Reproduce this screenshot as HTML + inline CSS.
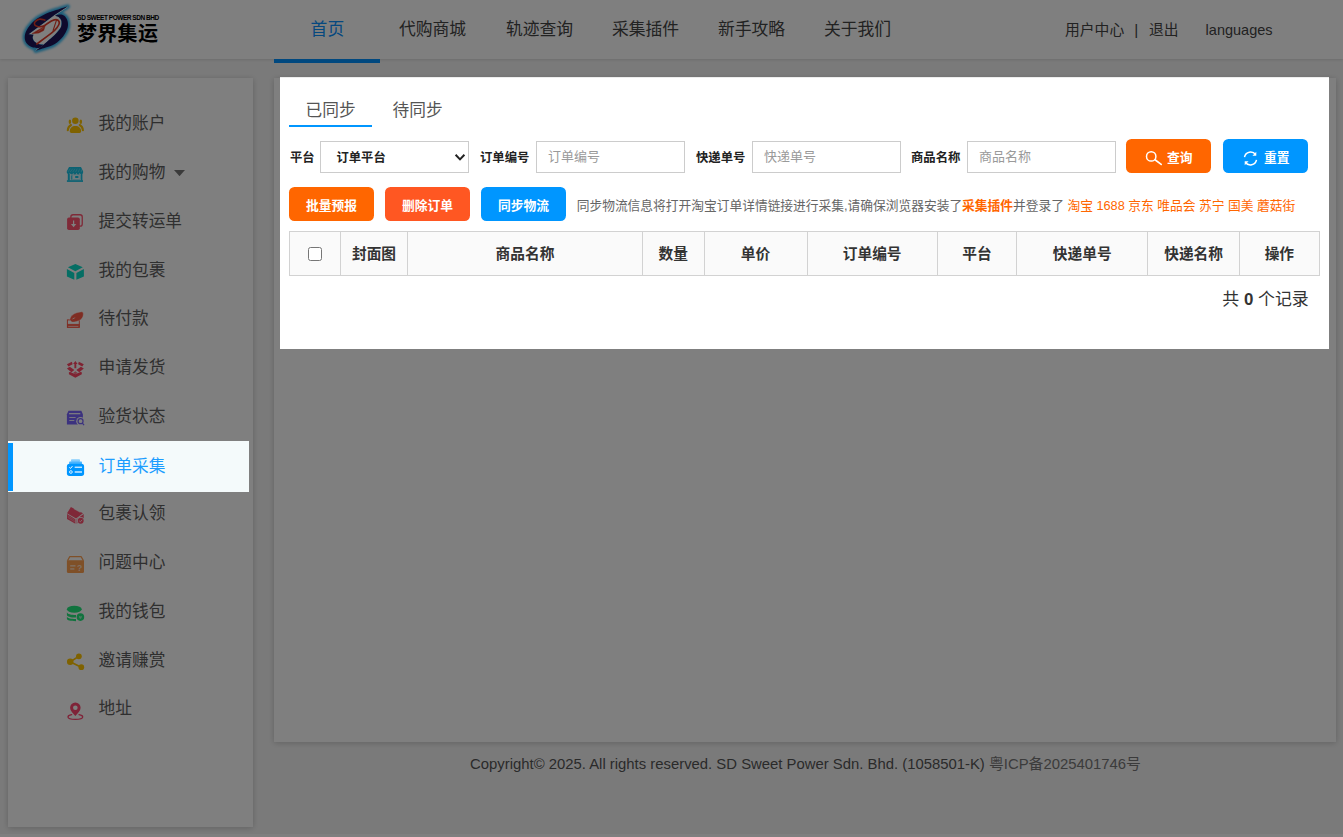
<!DOCTYPE html>
<html lang="zh-CN">
<head>
<meta charset="utf-8">
<title>订单采集 - 梦界集运</title>
<style>
*{box-sizing:border-box;margin:0;padding:0}
html,body{width:1343px;height:837px;overflow:hidden}
body{font-family:"Liberation Sans","Noto Sans CJK SC",sans-serif;background:#f5f5f5;color:#333;position:relative;font-size:14px}
a{text-decoration:none;color:inherit}
/* header */
#hd{position:absolute;left:0;top:0;width:1343px;height:59px;background:#fff;box-shadow:0 1px 3px rgba(0,0,0,.12)}
#logo{position:absolute}
#brand-s{position:absolute;left:77.3px;top:13.3px;font-size:6.5px;font-weight:bold;color:#000;letter-spacing:-.47px;white-space:nowrap;line-height:9px}
#brand{position:absolute;left:77px;top:20px;font-size:20px;font-weight:bold;color:#000;line-height:28px;white-space:nowrap;letter-spacing:.3px}
.nav{position:absolute;top:0;height:59px;line-height:59px;font-size:16.8px;color:#444;white-space:nowrap}
.nav.on{color:#0a90ff}
#navline{position:absolute;left:274px;top:59px;width:106px;height:3.8px;background:#0090ff}
.ur{position:absolute;top:0;height:59px;line-height:61px;font-size:14.8px;color:#444;white-space:nowrap}
/* sidebar */
#side{position:absolute;left:8px;top:77.7px;width:245px;height:749px;background:#fff;box-shadow:0 1px 6px rgba(0,0,0,.2)}
.mi{position:absolute;left:0;width:245px;height:49px}
.mi span{position:absolute;left:90.6px;top:0;line-height:51.4px;font-size:16.7px;color:#5e5e5e;white-space:nowrap}
/* main */
#main{position:absolute;left:274px;top:78px;width:1062px;height:663.7px;background:#fff;box-shadow:0 1px 6px rgba(0,0,0,.2)}
#bot{position:absolute;left:0;top:834px;width:1343px;height:3px;background:#fff}
#ft{position:absolute;left:274px;top:753.6px;width:1063px;text-align:center;font-size:14.86px;color:#555;line-height:20px;white-space:nowrap}
#ft b{font-weight:normal;color:#777}
#shade{position:absolute;left:0;top:0;width:1343px;height:837px;background:rgba(0,0,0,.5)}
/* active item above shade */
#act{position:absolute;left:8px;top:441px;width:241px;height:51px;background:#f4fafb}
#act i{position:absolute;left:0;top:1.5px;width:5px;height:48.5px;background:#0096ff}
#act span{position:absolute;left:90.6px;top:0;line-height:51px;font-size:16.7px;color:#1c9dff;white-space:nowrap}
/* modal */
#md{position:absolute;left:280px;top:77px;width:1049px;height:271.8px;background:#fff;box-shadow:inset 0 1px 0 #ececec}
.tab{position:absolute;top:21px;font-size:16.7px;line-height:26px;color:#555;white-space:nowrap}
#tabline{position:absolute;left:9px;top:48px;width:83px;height:2.4px;background:#0096ff}
.lb{position:absolute;top:66px;line-height:31px;font-size:12.35px;font-weight:bold;color:#222;white-space:nowrap}
.ip{position:absolute;top:64px;width:149px;height:32px;border:1px solid #ccc;background:#fff;font-size:13px;color:#9a9a9a;line-height:29px;padding-left:11px;white-space:nowrap}
.sel{color:#222;font-size:12.3px;font-weight:bold;padding-left:15.5px;line-height:32px}
.sel svg{position:absolute;left:133px;top:11px;width:12px;height:9px}
.btn{position:absolute;height:34px;width:85px;border-radius:5.5px;color:#fff;font-size:12.75px;font-weight:bold;text-align:center;line-height:38px;white-space:nowrap}
.btn svg{position:absolute}
#tip{position:absolute;left:296.7px;top:111.6px;line-height:34px;font-size:12.75px;color:#666;white-space:nowrap;letter-spacing:-.02px}
#tip i{font-style:normal;color:#ff6600}
#tb{position:absolute;left:9px;top:153.8px;width:1030.0px;height:44px;border-collapse:collapse;table-layout:fixed}
#tb th{border:1px solid #d2d2d2;background:#fafafa;font-size:14.7px;font-weight:bold;color:#333;text-align:center;height:44px;vertical-align:middle;padding-bottom:1.5px}
#cnt{position:absolute;right:20.3px;top:210.2px;font-size:16.9px;line-height:26px;color:#333;white-space:nowrap}
.cb{display:inline-block;width:14px;height:14px;border:1px solid #767676;border-radius:2.5px;background:#fff;vertical-align:middle;margin-top:0;position:relative;top:.5px}
</style>
</head>
<body>
<div id="hd">
  <svg id="logo" viewBox="10 0 80 60" style="left:10px;top:0;width:80px;height:60px">
   <defs><filter id="gl" x="-20%" y="-20%" width="140%" height="140%"><feGaussianBlur stdDeviation="1.05"/></filter></defs>
   <g filter="url(#gl)" fill="#3bbdf5" stroke="#3bbdf5" stroke-width="4.6" stroke-linejoin="round">
    <path d="M67.6 6.6C66.1 7.0 61.3 8.4 58.3 9.4C55.2 10.3 52.8 10.8 49.3 12.3C45.7 13.9 40.3 16.3 36.8 18.8C33.3 21.4 30.1 24.8 28.1 27.7C26.1 30.6 25.1 33.5 24.8 36.0C24.5 38.6 25.1 41.1 26.4 43.0C27.6 44.8 30.1 46.5 32.3 47.3C34.4 48.2 38.1 47.8 39.2 47.9L43.4 44.9C42.6 44.8 40.4 44.9 38.9 44.3C37.4 43.8 35.4 42.7 34.4 41.6C33.3 40.5 32.8 38.9 32.6 37.8C32.5 36.6 33.3 35.3 33.5 34.8L28.5 34.3L54.8 14.7Z"/>
    <path d="M35.7 50.7C37.3 50.2 41.9 48.9 45.1 47.8C48.3 46.7 51.8 45.9 54.8 44.0C57.8 42.1 61.0 39.1 63.1 36.4C65.2 33.7 66.9 30.4 67.6 27.7C68.3 25.1 68.0 22.4 67.4 20.4C66.8 18.5 65.3 16.8 64.2 15.8C63.0 14.8 61.7 14.6 60.3 14.5C59.0 14.5 57.2 15.0 55.8 15.4C54.5 15.8 52.7 16.8 52.0 17.1L54.8 16.1C55.4 16.2 57.5 16.2 58.6 17.0C59.7 17.8 61.0 19.1 61.4 20.8C61.8 22.5 62.1 24.7 61.0 27.0C60.0 29.3 58.0 31.8 55.1 34.6C52.3 37.5 45.9 42.7 44.1 44.3Z"/>
   </g>
   <path d="M28.5 34.3L54.8 14.7L58.6 17L61.4 20.8L61 27L55.1 34.6L44.1 44.3L38.9 44.3L34.4 41.6L32.6 37.8L33.5 34.8Z" fill="#fff"/>
   <path d="M67.6 6.9L54.8 15.2L52.5 17M35.7 50.5L44.1 44.3" stroke="#fff" stroke-width=".9" fill="none"/>
   <path d="M67.6 6.6C66.1 7.0 61.3 8.4 58.3 9.4C55.2 10.3 52.8 10.8 49.3 12.3C45.7 13.9 40.3 16.3 36.8 18.8C33.3 21.4 30.1 24.8 28.1 27.7C26.1 30.6 25.1 33.5 24.8 36.0C24.5 38.6 25.1 41.1 26.4 43.0C27.6 44.8 30.1 46.5 32.3 47.3C34.4 48.2 38.1 47.8 39.2 47.9L43.4 44.9C42.6 44.8 40.4 44.9 38.9 44.3C37.4 43.8 35.4 42.7 34.4 41.6C33.3 40.5 32.8 38.9 32.6 37.8C32.5 36.6 33.3 35.3 33.5 34.8L28.5 34.3L54.8 14.7Z" fill="#1e1458"/>
   <path d="M35.7 50.7C37.3 50.2 41.9 48.9 45.1 47.8C48.3 46.7 51.8 45.9 54.8 44.0C57.8 42.1 61.0 39.1 63.1 36.4C65.2 33.7 66.9 30.4 67.6 27.7C68.3 25.1 68.0 22.4 67.4 20.4C66.8 18.5 65.3 16.8 64.2 15.8C63.0 14.8 61.7 14.6 60.3 14.5C59.0 14.5 57.2 15.0 55.8 15.4C54.5 15.8 52.7 16.8 52.0 17.1L54.8 16.1C55.4 16.2 57.5 16.2 58.6 17.0C59.7 17.8 61.0 19.1 61.4 20.8C61.8 22.5 62.1 24.7 61.0 27.0C60.0 29.3 58.0 31.8 55.1 34.6C52.3 37.5 45.9 42.7 44.1 44.3Z" fill="#1e1458"/>
   <g fill="none" stroke="#e03a28" stroke-width="1.65" stroke-linecap="round" stroke-linejoin="round">
    <path d="M44.8 20.1C43.9 19.9 41.2 18.8 39.6 19.1C37.9 19.3 35.9 20.8 35.1 21.8C34.2 22.8 34.2 24.1 34.7 24.9C35.2 25.8 36.7 26.4 38.2 26.7C39.6 26.9 42.5 26.4 43.4 26.3"/>
    <path d="M43.4 26.3C44.8 25.4 49.8 21.9 52.0 20.8C54.3 19.7 55.7 19.4 56.9 19.7C58.1 20.1 59.3 21.5 59.3 22.9C59.3 24.2 58.1 26.1 56.9 27.7C55.7 29.3 55.4 29.8 52.0 32.6C48.7 35.3 39.3 42.1 36.8 44.0"/>
    <path d="M56.5 20.1 L53.1 30.5" stroke-width="1.1"/>
    <polygon points="32.3 33.6 45.1 26.0 43.7 30.5 38.9 32.9" fill="#e03a28" stroke-width=".5"/>
    <path d="M38 31.6L43.2 28.2" stroke="#fff" stroke-opacity=".5" stroke-width=".5"/>
   </g>
  </svg>
  <div id="brand-s">SD SWEET POWER SDN BHD</div>
  <div id="brand">梦界集运</div>
  <a class="nav on" style="left:310.6px">首页</a>
  <a class="nav" style="left:399px">代购商城</a>
  <a class="nav" style="left:506px">轨迹查询</a>
  <a class="nav" style="left:612px">采集插件</a>
  <a class="nav" style="left:718px">新手攻略</a>
  <a class="nav" style="left:824px">关于我们</a>
  <div id="navline"></div>
  <a class="ur" style="left:1065px">用户中心</a>
  <span class="ur" style="left:1134.3px;font-size:15.5px;line-height:59px">|</span>
  <a class="ur" style="left:1149px">退出</a>
  <a class="ur" style="left:1205.6px;font-size:14.5px">languages</a>
</div>

<div id="side">
  <div class="mi" style="top:20.7px"><span>我的账户</span></div>
  <div class="mi" style="top:69.5px"><span>我的购物</span><svg style="position:absolute;left:166px;top:23.1px;width:11px;height:6.2px" viewBox="0 0 11 6.2"><path d="M0 0H11L5.5 6.2Z" fill="#777"/></svg></div>
  <div class="mi" style="top:118.2px"><span>提交转运单</span></div>
  <div class="mi" style="top:167.0px"><span>我的包裹</span></div>
  <div class="mi" style="top:215.8px"><span>待付款</span></div>
  <div class="mi" style="top:264.5px"><span>申请发货</span></div>
  <div class="mi" style="top:313.3px"><span>验货状态</span></div>
  <div class="mi" style="top:410.8px"><span>包裹认领</span></div>
  <div class="mi" style="top:459.5px"><span>问题中心</span></div>
  <div class="mi" style="top:508.3px"><span>我的钱包</span></div>
  <div class="mi" style="top:557.0px"><span>邀请赚赏</span></div>
  <div class="mi" style="top:605.8px"><span>地址</span></div>
</div>

<svg id="ics" style="position:absolute;left:56px;top:100px;width:40px;height:640px" viewBox="56 100 40 640">
 <!-- 1 account -->
 <g fill="#ffc400" stroke="none">
  <circle cx="75.35" cy="120.7" r="3.25"/>
  <path d="M69.8 131.3C69.8 128 72 126 75.4 126S81.1 128 81.1 131.3Q81.1 132.9 79.6 132.9H71.3Q69.8 132.9 69.8 131.3Z"/>
  <ellipse cx="69.9" cy="121.7" rx="1.25" ry="2.2"/>
  <ellipse cx="80.8" cy="121.7" rx="1.25" ry="2.2"/>
  <path d="M71 125Q68 126.8 67.8 130.2M79.7 125Q82.7 126.8 82.9 130.2" fill="none" stroke="#ffc400" stroke-width="2.1" stroke-linecap="round"/>
 </g>
 <!-- 2 shop -->
 <g fill="#18c4e6">
  <path d="M69 167H81L83.1 171.3V172.8A1.7 1.7 0 0 1 79.8 173.1A1.7 1.7 0 0 1 76.5 173.1A1.7 1.7 0 0 1 73.2 173.1A1.7 1.7 0 0 1 69.9 173.1A1.7 1.7 0 0 1 66.8 172.8V171.2Z"/>
  <path d="M67.8 172L70.4 168.6M70.2 172L72.8 168.6M72.8 172L75 168.6M75.6 172L77.2 168.6M78.4 172L79.6 168.6M81.2 172L81.6 169.6" stroke="#fff" stroke-opacity=".33" stroke-width=".8" fill="none"/>
  <rect x="67.8" y="173.5" width="2" height="7"/>
  <rect x="80.9" y="173.5" width="1.5" height="7"/>
  <rect x="66.9" y="180.2" width="16.1" height="1.7"/>
  <rect x="69.8" y="174" width="11.1" height="6.2" fill-opacity=".12"/>
  <rect x="70.9" y="175.4" width=".9" height="4.3"/>
  <rect x="72.6" y="174.8" width="7.6" height="4.7" fill="none" stroke="#18c4e6" stroke-opacity=".45" stroke-width=".7"/>
  <rect x="75.2" y="176" width="3.2" height="2"/>
 </g>
 <!-- 3 submit -->
 <g>
  <rect x="70.85" y="214.75" width="11.4" height="11.4" rx="2.2" fill="none" stroke="#ff5470" stroke-width="1.3"/>
  <rect x="67.1" y="217.5" width="12.7" height="12.5" rx="1.8" fill="#ff5470"/>
  <path d="M73.6 220.6V225" stroke="#fff" stroke-width="1.2" fill="none"/>
  <path d="M70.9 223.9H76.3L73.6 227.2Z" fill="#fff"/>
 </g>
 <!-- 4 cube -->
 <g fill="#0adcc8">
  <path d="M75.35 263.9L82.8 267.2L75.35 271.2L67.9 267.2Z"/>
  <path d="M66.9 268.9L74.3 272.9V279.8L66.9 276.5Z"/>
  <path d="M76.4 272.9L83.9 268.9V276.5L76.4 279.8Z"/>
 </g>
 <!-- 5 pay -->
 <g fill="#ff5a46">
  <rect x="67.4" y="319.9" width="11.9" height="7.4" fill="none" stroke="#ff5a46" stroke-width="1"/>
  <rect x="67" y="323.9" width="12.7" height="3.8" fill-opacity=".92"/>
  <rect x="68.2" y="326.2" width="10.1" height=".7" fill="#fff" fill-opacity=".8"/>
  <path d="M69.8 319.8C70.5 315.5 74 312.6 81.8 311.8C84.4 312.2 83.5 317.6 80.6 319.7C78 321.4 74.5 322.2 71.8 322.1Z" stroke="#fff" stroke-opacity=".8" stroke-width=".5"/>
  <path d="M71.6 319.6Q73.3 317.3 75.6 317.2Q74.5 318.8 71.6 319.6Z" fill="#fff" fill-opacity=".85"/>
 </g>
 <!-- 6 ship -->
 <g fill="#ff4664">
  <path d="M75.35 361L77.6 363.9H76.3V368.2H74.4V363.9H73.1Z"/>
  <path d="M66.9 364.2L71.9 361.7L72.6 364.2L68.5 366.4Z"/>
  <path d="M83.8 364.2L78.8 361.7L78.1 364.2L82.2 366.4Z"/>
  <path d="M66.9 368.5L69.8 366.7L74.4 370L71.4 372.3Z"/>
  <path d="M83.8 368.5L80.9 366.7L76.3 370L79.3 372.3Z"/>
  <path d="M68.9 372.2L70.3 371.9L75.35 374.2L80.4 371.9L81.8 372.2V374.3L75.35 377.7L68.9 374.3Z"/>
  <path d="M75.35 371.2L77.6 373L75.35 374.3L73.1 373Z" fill-opacity=".75"/>
 </g>
 <!-- 7 inspect -->
 <g fill="#7864ff">
  <path d="M66.9 414.3L68.5 410.8H81.3L82.9 414.3V424.4H66.9Z"/>
  <rect x="69" y="413" width="11.3" height="1.3" fill="#fff" fill-opacity=".9"/>
  <rect x="69.3" y="417" width="6.3" height="1" fill="#fff" fill-opacity=".85"/>
  <rect x="69.3" y="420" width="5" height="1" fill="#fff" fill-opacity=".85"/>
  <circle cx="80.55" cy="421.2" r="4.3" fill="#fff"/>
  <path d="M82 422.8L85 426" stroke="#fff" stroke-width="3.2"/>
  <circle cx="80.55" cy="421.2" r="2.5" fill="none" stroke="#7864ff" stroke-width="1.25"/>
  <path d="M82.5 423.3L83.7 424.7" stroke="#7864ff" stroke-width="1.3" stroke-linecap="round"/>
 </g>
 <!-- 9 claim -->
 <g fill="#ff5070">
  <path d="M70.9 507.1L83 513.3L76.1 518.6L67 513.3Z"/>
  <path d="M74 508.3L80.6 512.2" stroke="#fff" stroke-opacity=".8" stroke-width="1.4"/>
  <path d="M67 514.1L75.4 519.2V523.8L67 518.9Z"/>
  <path d="M67.6 515.7L74.8 520.2M67.6 517.2L74.8 521.8" stroke="#fff" stroke-opacity=".55" stroke-width=".6"/>
  <path d="M76.6 519.3L83.7 513.9V519L76.6 523.8Z"/>
  <circle cx="80.7" cy="520.7" r="3.7" fill="#fff"/>
  <circle cx="80.7" cy="520.7" r="2.95"/>
  <path d="M79.3 520.9L80.3 521.8L82.2 519.8" stroke="#fff" stroke-opacity=".85" stroke-width=".9" fill="none"/>
 </g>
 <!-- 10 question -->
 <g fill="#ffa050">
  <path d="M66.9 560.3H84V571.4Q84 572.9 82.5 572.9H68.4Q66.9 572.9 66.9 571.4Z"/>
  <path d="M67.6 560.5L69.7 556.7H81.2L83.3 560.5" fill="none" stroke="#ffa050" stroke-width="1.3" stroke-linejoin="round"/>
  <rect x="70.2" y="565.2" width="5.3" height="1.3" fill="#fff" fill-opacity=".72"/>
  <rect x="70.2" y="568.3" width="4.2" height="1.3" fill="#fff" fill-opacity=".72"/>
  <text x="77.1" y="570.9" font-family="Liberation Sans, sans-serif" font-weight="bold" font-size="8.6" fill="#fff" fill-opacity=".7">?</text>
 </g>
 <!-- 11 wallet -->
 <g fill="#22e67c">
  <ellipse cx="74.3" cy="609.3" rx="7.4" ry="3.45"/>
  <path d="M66.9 612.3C67.6 614.3 71 615 76 615V617.6C70.5 617.6 66.9 616.7 66.9 614.8Z"/>
  <path d="M66.9 616.6C67.6 618.5 71 619 76 619V621.2C70.5 621.2 66.9 620.5 66.9 618.8Z"/>
  <circle cx="80.4" cy="617.1" r="4.5" fill="#fff"/>
  <circle cx="80.4" cy="617.1" r="3.8"/>
  <path d="M78.9 615.7L80.4 616.4L81.9 615.7Q81.9 618.2 80.4 619.1Q78.9 618.2 78.9 615.7Z" fill="#fff" fill-opacity=".55"/>
 </g>
 <!-- 12 share -->
 <g fill="#ffc400">
  <circle cx="70.2" cy="661.8" r="3.25"/>
  <circle cx="78.9" cy="656.3" r="2.85"/>
  <circle cx="81.3" cy="667.2" r="2.85"/>
  <path d="M78.9 656.3L70.2 661.8L81.3 667.2" fill="none" stroke="#ffc400" stroke-width="1.6"/>
 </g>
 <!-- 13 address -->
 <g fill="#ff4670">
  <path fill-rule="evenodd" d="M75.35 716C73 713.2 70.1 710.7 70.1 707.7A5.25 5.25 0 0 1 80.6 707.7C80.6 710.7 77.7 713.2 75.35 716ZM75.35 705.4A2.3 2.3 0 1 0 75.35 710A2.3 2.3 0 1 0 75.35 705.4Z"/>
  <path d="M71.7 714.7C69.4 715.1 68 715.9 68 716.9C68 718.3 71.3 719.3 75.35 719.3S82.7 718.3 82.7 716.9C82.7 715.9 81.3 715.1 79 714.7" fill="none" stroke="#ff4670" stroke-width="1.3" stroke-linecap="round"/>
 </g>
</svg>
<div id="main"></div>
<div id="bot"></div>
<div id="ft">Copyright© 2025. All rights reserved. SD Sweet Power Sdn. Bhd. (1058501-K) <b>粤ICP备2025401746号</b></div>

<div id="shade"></div>

<div id="act"><i></i><span>订单采集</span></div>
<svg style="position:absolute;left:56px;top:451px;width:40px;height:30px" viewBox="56 451 40 30">
 <rect x="71" y="459.2" width="9" height="2.6" rx=".8" fill="#0096ff" fill-opacity=".45"/>
 <rect x="69.1" y="461.4" width="12.9" height="3" rx=".8" fill="#0096ff" fill-opacity=".7"/>
 <rect x="66.9" y="463.8" width="17.2" height="12.1" rx="2.6" fill="#0096ff"/>
 <path d="M69.4 467.4L70.5 468.4L72.4 466.2" stroke="#fff" stroke-width="1" fill="none"/>
 <rect x="74.7" y="466.6" width="7.3" height="1.3" fill="#fff" fill-opacity=".85"/>
 <circle cx="70.9" cy="472" r="1.35" fill="none" stroke="#fff" stroke-opacity=".9" stroke-width=".9"/>
 <rect x="74.7" y="471.3" width="7.3" height="1.4" fill="#fff" fill-opacity=".85"/>
</svg>


<div id="md">
  <div class="tab" style="left:25.6px">已同步</div>
  <div class="tab" style="left:112.6px">待同步</div>
  <div id="tabline"></div>

  <div class="lb" style="left:10px">平台</div>
  <div class="ip sel" style="left:40px">订单平台<svg viewBox="0 0 12 9"><path d="M1.6 1.8 L6 6.4 L10.4 1.8" fill="none" stroke="#222" stroke-width="2"/></svg></div>
  <div class="lb" style="left:200px">订单编号</div>
  <div class="ip" style="left:256px">订单编号</div>
  <div class="lb" style="left:416px">快递单号</div>
  <div class="ip" style="left:472px">快递单号</div>
  <div class="lb" style="left:631px">商品名称</div>
  <div class="ip" style="left:687px">商品名称</div>
  <div class="btn" style="left:846px;top:62px;background:#ff6600;text-align:left;padding-left:41px"><svg style="left:18px;top:10px;width:19px;height:19px" viewBox="0 0 19 19"><circle cx="7.2" cy="7.4" r="4.7" fill="none" stroke="#fff" stroke-width="1.5"/><path d="M11 10.8 L17.2 15.4" stroke="#fff" stroke-width="1.7" stroke-linecap="round"/></svg>查询</div>
  <div class="btn" style="left:943px;top:62px;background:#0096ff;text-align:left;padding-left:41px"><svg style="left:19px;top:10.6px;width:17px;height:17px" viewBox="0 0 15 15"><path d="M2.2 6.2 A5.4 5.4 0 0 1 12 4.2 M12.8 8.8 A5.4 5.4 0 0 1 3 10.8" fill="none" stroke="#fff" stroke-width="1.3"/><path d="M12.6 1.6 V5 H9.2 Z M2.4 13.4 V10 H5.8 Z" fill="#fff"/></svg>重置</div>

  <div class="btn" style="left:9px;top:110px;background:#ff6600">批量预报</div>
  <div class="btn" style="left:105px;top:110px;background:#ff5722">删除订单</div>
  <div class="btn" style="left:201px;top:110px;background:#0096ff">同步物流</div>
  <div id="tip">同步物流信息将打开淘宝订单详情链接进行采集,请确保浏览器安装了<i><b>采集插件</b></i>并登录了 <i>淘宝 1688 京东 唯品会 苏宁 国美 蘑菇街</i></div>

  <table id="tb"><tr>
    <th style="width:51px"><span class="cb"></span></th>
    <th style="width:67px">封面图</th>
    <th style="width:235px">商品名称</th>
    <th style="width:61.5px">数量</th>
    <th style="width:103px">单价</th>
    <th style="width:130.3px">订单编号</th>
    <th style="width:79.2px">平台</th>
    <th style="width:131.5px">快递单号</th>
    <th style="width:91.2px">快递名称</th>
    <th style="width:80.3px">操作</th>
  </tr></table>
  <div id="cnt">共 <b>0</b> 个记录</div>
</div>
</body>
</html>
